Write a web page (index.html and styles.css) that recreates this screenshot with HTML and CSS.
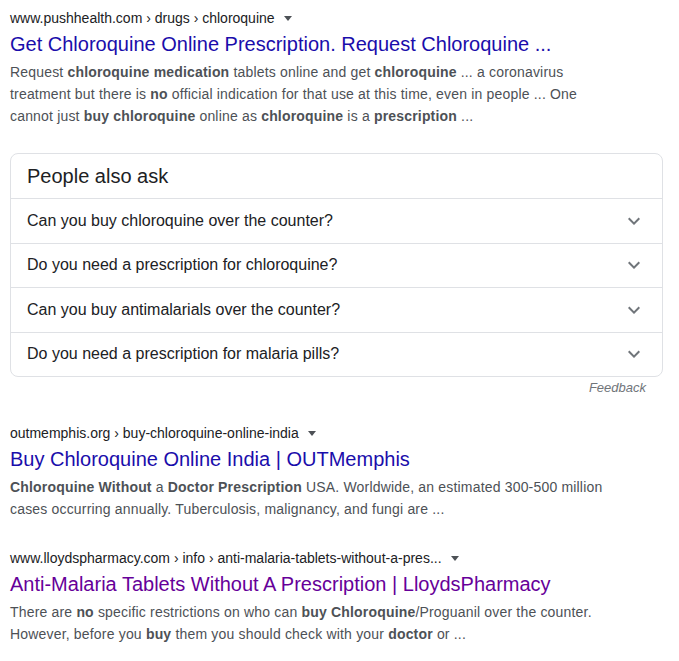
FILE: index.html
```html
<!DOCTYPE html>
<html>
<head>
<meta charset="utf-8">
<link rel="stylesheet" href="styles.css">
</head>
<body>
<div class="page">
  <div class="result">
    <div class="cite"><span>www.pushhealth.com › drugs › chloroquine</span><span class="arrow"></span></div>
    <a class="title" href="#">Get Chloroquine Online Prescription. Request Chloroquine ...</a>
    <div class="snippet">Request <b>chloroquine medication</b> tablets online and get <b>chloroquine</b> ... a coronavirus treatment but there is <b>no</b> official indication for that use at this time, even in people ... One cannot just <b>buy chloroquine</b> online as <b>chloroquine</b> is a <b>prescription</b> ...</div>
  </div>

  <div class="paa">
    <div class="paa-head">People also ask</div>
    <div class="paa-row"><span>Can you buy chloroquine over the counter?</span><svg class="chev" viewBox="0 0 24 24"><path d="M7.41 8.59L12 13.17l4.59-4.58L18 10l-6 6-6-6 1.41-1.41z"/></svg></div>
    <div class="paa-row"><span>Do you need a prescription for chloroquine?</span><svg class="chev" viewBox="0 0 24 24"><path d="M7.41 8.59L12 13.17l4.59-4.58L18 10l-6 6-6-6 1.41-1.41z"/></svg></div>
    <div class="paa-row"><span>Can you buy antimalarials over the counter?</span><svg class="chev" viewBox="0 0 24 24"><path d="M7.41 8.59L12 13.17l4.59-4.58L18 10l-6 6-6-6 1.41-1.41z"/></svg></div>
    <div class="paa-row"><span>Do you need a prescription for malaria pills?</span><svg class="chev" viewBox="0 0 24 24"><path d="M7.41 8.59L12 13.17l4.59-4.58L18 10l-6 6-6-6 1.41-1.41z"/></svg></div>
  </div>
  <div class="feedback">Feedback</div>

  <div class="result r2">
    <div class="cite"><span>outmemphis.org › buy-chloroquine-online-india</span><span class="arrow"></span></div>
    <a class="title" href="#">Buy Chloroquine Online India | OUTMemphis</a>
    <div class="snippet"><b>Chloroquine Without</b> a <b>Doctor Prescription</b> USA. Worldwide, an estimated 300-500 million cases occurring annually. Tuberculosis, malignancy, and fungi are ...</div>
  </div>

  <div class="result r3">
    <div class="cite"><span>www.lloydspharmacy.com › info › anti-malaria-tablets-without-a-pres...</span><span class="arrow"></span></div>
    <a class="title visited" href="#">Anti-Malaria Tablets Without A Prescription | LloydsPharmacy</a>
    <div class="snippet">There are <b>no</b> specific restrictions on who can <b>buy Chloroquine</b>/Proguanil over the counter. However, before you <b>buy</b> them you should check with your <b>doctor</b> or ...</div>
  </div>
</div>
</body>
</html>
```

FILE: styles.css
```css
html, body {
  margin: 0;
  padding: 0;
  background: #fff;
}
body {
  font-family: "Liberation Sans", Arial, sans-serif;
  color: #202124;
}
.page {
  padding: 9px 16px 0 10px;
}
.result {
  width: 600px;
}
.cite {
  font-size: 14px;
  line-height: 18px;
  color: #202124;
  display: flex;
  align-items: center;
}
.arrow {
  display: inline-block;
  width: 0;
  height: 0;
  border-left: 4px solid transparent;
  border-right: 4px solid transparent;
  border-top: 5px solid #4d5156;
  margin-left: 9px;
  margin-top: 1px;
}
.title {
  display: block;
  font-size: 20px;
  line-height: 26px;
  color: #1a0dab;
  text-decoration: none;
  margin-top: 4px;
  white-space: nowrap;
}
.title.visited {
  color: #660099;
}
.snippet {
  font-size: 14px;
  line-height: 22px;
  color: #4d5156;
  margin-top: 4px;
  letter-spacing: 0.18px;
}
.snippet b {
  color: #4d5156;
  font-weight: bold;
}
.paa {
  margin-top: 26px;
  border: 1px solid #dfe1e5;
  border-radius: 8px;
}
.paa-head {
  font-size: 20px;
  line-height: 26px;
  padding: 9px 16px 9px 16px;
  color: #202124;
}
.paa-row {
  display: flex;
  align-items: center;
  justify-content: space-between;
  border-top: 1px solid #dfe1e5;
  height: 43.5px;
  padding: 0 16px;
  font-size: 16px;
  color: #202124;
}
.chev {
  width: 24px;
  height: 24px;
  fill: #70757a;
}
.feedback {
  text-align: right;
  font-size: 13px;
  font-style: italic;
  color: #70757a;
  line-height: 18px;
  padding: 2px 17px 0 0;
}
.r2 {
  margin-top: 27px;
}
.r3 {
  margin-top: 29px;
}
```
